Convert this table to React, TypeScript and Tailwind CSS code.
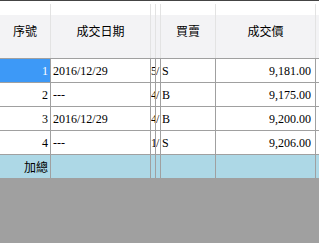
import React from "react";

type Trade = {
  no: number;
  date: string;
  a: string;
  b: string;
  side: string;
  price: string;
};

const trades: Trade[] = [
  { no: 1, date: "2016/12/29", a: "5", b: "/", side: "S", price: "9,181.00" },
  { no: 2, date: "---", a: "4", b: "/", side: "B", price: "9,175.00" },
  { no: 3, date: "2016/12/29", a: "4", b: "/", side: "B", price: "9,200.00" },
  { no: 4, date: "---", a: "1", b: "/", side: "S", price: "9,206.00" },
];

const font = "font-['Liberation_Serif','Noto_Sans_CJK_TC',serif]";
const cjk = "font-['Noto_Sans_CJK_TC','Liberation_Sans',sans-serif]";

const App = () => {
  return (
    <div className={`w-[319px] h-[243px] bg-[#a0a0a0] overflow-hidden ${font} text-[12px] text-black`}>
      <div className="border-t border-[#444] bg-white">
        {/* header */}
        <div className={`flex h-[58px] pt-[3px] border-b border-[#a0a0a0] bg-[linear-gradient(#fff_0,#fff_24%,#f3f3f5_24%,#f3f3f5_100%)] ${cjk} text-[12px]`}>
          <div className="w-[51px] shrink-0 flex items-center justify-center border-r border-[#e3e3e3]">序號</div>
          <div className="w-[100px] shrink-0 flex items-center justify-center border-r border-[#e3e3e3]">成交日期</div>
          <div className="w-[5px] shrink-0 border-r border-[#e3e3e3]"></div>
          <div className="w-[5px] shrink-0 border-r border-[#e3e3e3]"></div>
          <div className="w-[55px] shrink-0 flex items-center justify-center border-r border-[#e3e3e3]">買賣</div>
          <div className="w-[100px] shrink-0 flex items-center justify-center border-r border-[#e3e3e3]">成交價</div>
          <div className="flex-1"></div>
        </div>

        {/* rows */}
        {trades.map((t) => (
          <div key={t.no} className="flex h-[24px] border-b border-[#a0a0a0]">
            <div
              className={`w-[51px] shrink-0 flex items-center justify-end pr-[2px] border-r border-[#a0a0a0] ${
                t.no === 1 ? "bg-[#3d99f7] text-white" : ""
              }`}
            >
              {t.no}
            </div>
            <div className="w-[100px] shrink-0 flex items-center pl-[2px] border-r border-[#a0a0a0]">{t.date}</div>
            <div className="w-[5px] shrink-0 flex items-center overflow-hidden border-r border-[#a0a0a0]">{t.a}</div>
            <div className="w-[5px] shrink-0 flex items-center overflow-hidden border-r border-[#a0a0a0]">{t.b}</div>
            <div className="w-[55px] shrink-0 flex items-center pl-[1px] border-r border-[#a0a0a0]">{t.side}</div>
            <div className="w-[100px] shrink-0 flex items-center justify-end pr-[4px] border-r border-[#a0a0a0]">{t.price}</div>
            <div className="flex-1"></div>
          </div>
        ))}

        {/* total */}
        <div className={`flex h-[24px] border-b border-[#a0a0a0] bg-[#add8e6] ${cjk}`}>
          <div className="w-[51px] shrink-0 flex items-center justify-end pr-[2px] border-r border-[#a0a0a0]">加總</div>
          <div className="w-[100px] shrink-0 border-r border-[#a0a0a0]"></div>
          <div className="w-[5px] shrink-0 border-r border-[#a0a0a0]"></div>
          <div className="w-[5px] shrink-0 border-r border-[#a0a0a0]"></div>
          <div className="w-[55px] shrink-0 border-r border-[#a0a0a0]"></div>
          <div className="w-[100px] shrink-0 border-r border-[#a0a0a0]"></div>
          <div className="flex-1"></div>
        </div>
      </div>
    </div>
  );
};

export default App;
